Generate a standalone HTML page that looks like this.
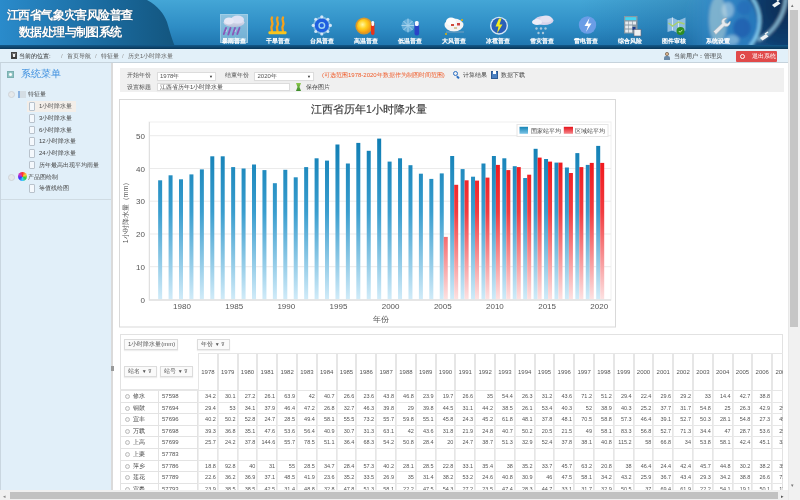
<!DOCTYPE html>
<html><head><meta charset="utf-8">
<style>
*{margin:0;padding:0;box-sizing:border-box}
html,body{width:800px;height:500px;overflow:hidden;background:#fff;font-family:"Liberation Sans",sans-serif;}
body{filter:blur(0.5px)}
.a{position:absolute}
#hdr{left:0;top:0;width:788px;height:49px;background:linear-gradient(#44a6d6,#2e8dc5 55%,#1d72ab);overflow:hidden}
.ttl{color:#fff;font-weight:bold;font-size:12px;letter-spacing:-0.6px;white-space:nowrap;text-shadow:0 0 1px #456}
.lb{top:36.5px;width:50px;font-size:6px;line-height:8px;color:#fff;text-align:center;white-space:nowrap;font-weight:bold;text-shadow:0 0 1px rgba(255,255,255,0.5)}
#crumb{left:0;top:49px;width:788px;height:14px;background:#e2f0f9;border-bottom:1px solid #c6d3dc}
#sbar{left:788px;top:0;width:12px;height:500px;background:#f1f1f1;border-left:1px solid #e8e8e8}
#side{left:0;top:63px;width:112px;height:437px;background:#e1eff9;border-left:1px solid #c9d6e0;border-right:1px solid #c9d6e0}
#main{left:111px;top:63px;width:677px;height:437px;background:#fff;border-left:2px solid #dadada}
.t7{font-size:6px;color:#444;white-space:nowrap;line-height:8px}
.ax{font-size:8px;fill:#555}
.lg{font-size:6px;fill:#444}
.hc{border-left:1px solid #e6e6e6;border-right:1px solid #e6e6e6;border-bottom:1px solid #e6e6e6;border-top:1px solid #e6e6e6;font-size:6px;color:#555;text-align:center;line-height:36px}
.rc{border-right:1px solid #e3e3e3;border-bottom:1px solid #e3e3e3;font-size:6px;color:#333;line-height:11px;white-space:nowrap}
.dc{border-left:1px solid #eee;border-right:1px solid #e6e6e6;border-bottom:1px solid #e6e6e6;font-size:5.5px;color:#555;text-align:right;padding-right:1px;line-height:11px;white-space:nowrap}
.pl{position:absolute;left:5px;top:3px;width:5px;height:5px;border:1px solid #bbb;border-radius:50%;background:#f4f4f4}
.nm{position:absolute;left:13px;top:0;font-size:6px;color:#444}
.sid{position:absolute;left:3px;top:0;font-size:6px;color:#555}
.fb{border:1px solid #dcdcdc;background:#fafafa;font-size:6px;color:#555;line-height:9px;padding-left:3px;white-space:nowrap;box-shadow:0 1px 1px #eee}
.si{position:absolute;font-size:6px;color:#444;white-space:nowrap;line-height:8px}
.doc{position:absolute;width:6px;height:8.5px;border:1px solid #b8c2cc;background:#f4f8fc;border-radius:1px}
</style></head><body>
<!-- header -->
<div id="hdr" class="a">
  <svg class="a" style="left:0;top:0" width="788" height="49">
    <defs>
      <linearGradient id="lg1" x1="0" x2="1" y1="0" y2="0">
        <stop offset="0" stop-color="#2a8bcb"/><stop offset="0.6" stop-color="#1a6a9e"/><stop offset="1" stop-color="#13557e"/>
      </linearGradient>
      <radialGradient id="earth" cx="0.5" cy="0.5" r="0.5">
        <stop offset="0" stop-color="#3d93cf" stop-opacity="0.3"/><stop offset="0.6" stop-color="#3a8fcf" stop-opacity="0.85"/><stop offset="0.9" stop-color="#2f86c8"/><stop offset="0.97" stop-color="#7fd0f4"/><stop offset="1" stop-color="#2a80c0" stop-opacity="0.2"/>
      </radialGradient>
      <radialGradient id="space" cx="0.8" cy="0.2" r="0.9">
        <stop offset="0" stop-color="#0b2a52"/><stop offset="0.7" stop-color="#0f3f70"/><stop offset="1" stop-color="#1a5c94"/>
      </radialGradient>
      <filter id="bl" x="-0.2" y="-0.2" width="1.4" height="1.4"><feGaussianBlur stdDeviation="1.5"/></filter>
      <linearGradient id="shade" x1="0" x2="1" y1="0" y2="0"><stop offset="0" stop-color="#0a3a6a" stop-opacity="0"/><stop offset="0.6" stop-color="#0a3a6a" stop-opacity="0.22"/><stop offset="1" stop-color="#0a3a6a" stop-opacity="0.3"/></linearGradient>
      <linearGradient id="earthH" x1="684" x2="758" y1="0" y2="0" gradientUnits="userSpaceOnUse"><stop offset="0" stop-color="#3a92cc" stop-opacity="0"/><stop offset="0.4" stop-color="#3388c8" stop-opacity="0.8"/><stop offset="1" stop-color="#2778bc"/></linearGradient>
      <linearGradient id="btm" x1="0" x2="0" y1="0" y2="1"><stop offset="0" stop-color="#13598a"/><stop offset="1" stop-color="#0a3657"/></linearGradient>
    </defs>
    <path d="M0 0 H147 C158 6 164 14 167 22 C170 32 172 40 176 49 H0 Z" fill="url(#lg1)"/>
    <rect x="580" y="0" width="208" height="49" fill="url(#shade)"/>
    <g filter="url(#bl)">
    <rect x="742" y="-5" width="55" height="60" fill="url(#space)"/>
    <circle cx="720" cy="24" r="38" fill="url(#earthH)"/>
    <ellipse cx="742" cy="28" rx="9" ry="10" fill="#1d5cae" opacity="0.75"/>
    <ellipse cx="744" cy="8" rx="7" ry="7" fill="#2468b8" opacity="0.6"/>
    <ellipse cx="718" cy="20" rx="9" ry="24" fill="#c8dcd8" opacity="0.5"/>
    <ellipse cx="728" cy="10" rx="6" ry="8" fill="#dcecf2" opacity="0.45"/>
    <ellipse cx="732" cy="40" rx="7" ry="5" fill="#d0e6f0" opacity="0.45"/>
    <path d="M752 -2 A38 38 0 0 1 750 46" stroke="#8cd8fa" stroke-width="2.6" fill="none"/>
    <path d="M786 -2 C784 18 772 34 758 40" stroke="#b0e6fb" stroke-width="3" fill="none" opacity="0.75"/>
    </g>
    <path d="M772 5 l6 -4 l2.5 2.5 l-6 4z" fill="#eef2f4"/><path d="M777 1 l3 -2" stroke="#eef2f4" stroke-width="1.5"/>
    <path d="M760 38 l6 -4 l2.5 2.5 l-6 4z" fill="#eef2f4"/><path d="M765 34 l3 -2" stroke="#eef2f4" stroke-width="1.5"/>
    <rect x="0" y="45" width="788" height="4" fill="url(#btm)"/>
  </svg>
  <div class="a ttl" style="left:7px;top:6.5px">江西省气象灾害风险普查</div>
  <div class="a ttl" style="left:19px;top:24px">数据处理与制图系统</div>
  <!-- nav items -->
  <div class="a" style="left:219.5px;top:14px;width:28px;height:28.5px;background:linear-gradient(#a9d0e6,#8cc0de);opacity:0.75;border:1px solid #c2e0f0"></div>
  <svg class="a" style="left:0;top:0" width="788" height="49">
    <defs>
      <linearGradient id="cl1" x1="0" y1="0" x2="0" y2="1"><stop offset="0" stop-color="#eef0fa"/><stop offset="1" stop-color="#b9bfd8"/></linearGradient>
      <radialGradient id="sun" cx="0.4" cy="0.4" r="0.6"><stop offset="0" stop-color="#fff6a0"/><stop offset="0.5" stop-color="#ffd020"/><stop offset="1" stop-color="#f59a10"/></radialGradient>
    </defs>
    <!-- rain -->
    <g>
      <ellipse cx="234" cy="22.5" rx="10.5" ry="4.5" fill="url(#cl1)"/>
      <ellipse cx="237.5" cy="19.5" rx="6.5" ry="4" fill="#dfe2f4"/>
      <ellipse cx="229" cy="21" rx="5" ry="3.5" fill="#e6e8f6"/>
      <path d="M226 28 l-2.2 6 M230.5 28 l-2.2 6.5 M235 28 l-2.2 6.5 M239.5 28 l-2.2 6" stroke="#8a58b8" stroke-width="1.9" stroke-linecap="round"/>
      <path d="M227 29.5 l-1 2.5 M236 29.5 l-1 2.5" stroke="#d8c8f0" stroke-width="0.8"/>
    </g>
    <!-- heat -->
    <path d="M272 17.5 c-2 3 2 5 0 8 c-1.5 2 0 4 0 6 M277.5 17.5 c-2 3 2 5 0 8 c-1.5 2 0 4 0 6 M283 17.5 c-2 3 2 5 0 8 c-1.5 2 0 4 0 6" stroke="#f5a21c" stroke-width="2.3" fill="none" stroke-linecap="round"/>
    <rect x="268.5" y="31.3" width="18" height="3" rx="1" fill="#f7c51e"/>
    <!-- typhoon -->
    <circle cx="321.8" cy="25.4" r="8.8" fill="#c8def8" opacity="0.5"/>
    <circle cx="321.8" cy="25.4" r="7" fill="#1f5fe0"/>
    <g fill="#e8f2ff" opacity="0.85"><circle cx="321.8" cy="16.8" r="1.6"/><circle cx="321.8" cy="34" r="1.6"/><circle cx="313.2" cy="25.4" r="1.6"/><circle cx="330.4" cy="25.4" r="1.6"/><circle cx="315.7" cy="19.3" r="1.5"/><circle cx="327.9" cy="19.3" r="1.5"/><circle cx="315.7" cy="31.5" r="1.5"/><circle cx="327.9" cy="31.5" r="1.5"/></g>
    <circle cx="321.8" cy="25.4" r="2.8" fill="none" stroke="#9ed6f0" stroke-width="1.4"/>
    <!-- sun thermo -->
    <circle cx="364" cy="26" r="8.6" fill="#f59a10" opacity="0.85"/>
    <circle cx="364" cy="26" r="7" fill="url(#sun)"/>
    <rect x="371" y="22" width="3.5" height="13" rx="1.7" fill="#e8341a"/>
    <rect x="371.4" y="21" width="2.7" height="5" rx="1.3" fill="#fafafa"/>
    <!-- low temp -->
    <circle cx="408" cy="25.5" r="6.5" fill="#8cc4e8" opacity="0.55"/>
    <g stroke="#b8dcf2" stroke-width="1" opacity="0.8"><path d="M408 18.5 v14 M401.5 25.5 h13 M403.5 21 l9 9 M412.5 21 l-9 9"/></g>
    <rect x="414.5" y="22" width="4.6" height="13.5" rx="2" fill="#2a44c8"/>
    <rect x="414.9" y="21" width="3.8" height="5" rx="1.5" fill="#f4f8ff"/>
    <!-- wind -->
    <ellipse cx="454" cy="25" rx="9.5" ry="6.5" fill="#f4f4f4"/>
    <ellipse cx="451" cy="21.5" rx="5" ry="4" fill="#fcfcfc"/>
    <rect x="451" y="24" width="3" height="2" fill="#d04a3a"/><rect x="457" y="23" width="3" height="2.5" fill="#c44"/><rect x="454" y="27" width="3" height="2" fill="#d8c8a0"/>
    <path d="M446 32 h18" stroke="#8aa8c0" stroke-width="0.8"/>
    <rect x="461" y="19" width="2" height="2" fill="#b8a830"/><rect x="445" y="33" width="2" height="2" fill="#b8a830"/>
    <!-- hail -->
    <circle cx="499" cy="25.7" r="9" fill="#d6e8f6"/>
    <circle cx="499" cy="25.7" r="7.6" fill="#2a5fb8"/>
    <path d="M499 18.5 l-3.5 8 h3 l-1.5 7 l5.5 -9 h-3 l2 -6z" fill="#f2ea20"/>
    <!-- snow -->
    <ellipse cx="544" cy="20.5" rx="9.5" ry="4.5" fill="#d8d4ec"/>
    <ellipse cx="546" cy="19" rx="6" ry="3.5" fill="#e4e2f2"/>
    <ellipse cx="537" cy="22" rx="5" ry="3" fill="#eeedf8"/>
    <g fill="#a8c8dc"><circle cx="536.5" cy="28.5" r="1.2"/><circle cx="541" cy="28.5" r="1.2"/><circle cx="545.5" cy="28.5" r="1.2"/><circle cx="538.5" cy="33" r="1.2"/><circle cx="543" cy="33" r="1.2"/></g>
    <!-- lightning -->
    <circle cx="587.5" cy="25" r="8.7" fill="#6a9de6"/>
    <path d="M589.5 18 l-5 8 h3.5 l-2 6 l5.5 -8.5 h-3.5z" fill="#fff"/>
    <!-- calculator -->
    <rect x="624" y="16" width="13.5" height="17.5" fill="#8898a4"/>
    <rect x="625.2" y="17.2" width="11" height="3" fill="#44d4f2"/>
    <g fill="#e6eaee"><rect x="625.2" y="21.5" width="3.2" height="3"/><rect x="629" y="21.5" width="3.2" height="3"/><rect x="632.8" y="21.5" width="3.2" height="3"/><rect x="625.2" y="25.5" width="3.2" height="3"/><rect x="629" y="25.5" width="3.2" height="3"/><rect x="625.2" y="29.5" width="3.2" height="3"/><rect x="629" y="29.5" width="3.2" height="3"/></g>
    <rect x="632.5" y="27" width="3" height="3" fill="#1a3a8a"/>
    <rect x="634" y="29.5" width="7" height="6.5" fill="#eef0f2" stroke="#667" stroke-width="0.6"/>
    <!-- map -->
    <path d="M667.5 19 l5 -1.5 l6 3 l7 -3 v13 l-7 3 l-6 -3 l-5 1.5z" fill="#8fbde0"/>
    <path d="M672.5 17.5 v13 M678.5 20.5 v13" stroke="#e4eef6" stroke-width="0.8"/>
    <path d="M668.5 23 l4 3 l6 -4 l6 2" stroke="#a8d070" stroke-width="1.5" fill="none"/>
    <circle cx="680.5" cy="31" r="4" fill="#2e8e22"/>
    <path d="M678.8 31 l1.3 1.3 l2.3 -2.5" stroke="#d8f0c0" stroke-width="0.9" fill="none"/>
    <!-- wrench -->
    <path d="M713.5 31.5 l8.5 -8 c-1.5 -3.5 1 -6 5 -5.5 l-2.5 2.8 l0.8 2.2 l2.4 0.6 l2.5 -2.6 c0.8 4 -2.5 6.5 -6 5.3 l-8.3 8.2z" fill="#e6eaee" stroke="#a6b0b8" stroke-width="0.6"/>
  </svg>
  <div class="a lb" style="left:208.5px">暴雨普查</div><div class="a lb" style="left:252.5px">干旱普查</div><div class="a lb" style="left:296.5px">台风普查</div><div class="a lb" style="left:340.5px">高温普查</div><div class="a lb" style="left:384.5px">低温普查</div><div class="a lb" style="left:428.5px">大风普查</div><div class="a lb" style="left:472.5px">冰雹普查</div><div class="a lb" style="left:516.5px">雪灾普查</div><div class="a lb" style="left:560.5px">雷电普查</div><div class="a lb" style="left:604.5px">综合风险</div><div class="a lb" style="left:648.5px">图件审核</div><div class="a lb" style="left:692.5px">系统设置</div>
</div>
<!-- breadcrumb -->
<div id="crumb" class="a">
  <div class="a" style="left:10.5px;top:3px;width:6.5px;height:7px;background:linear-gradient(#777,#333);border:1px solid #444"></div><div class="a" style="left:12.5px;top:5px;width:2.5px;height:3px;background:#eee"></div>
  <div class="a t7" style="left:19px;top:3px;color:#222">当前的位置:</div>
  <div class="a t7" style="left:61px;top:3px;color:#999">/</div>
  <div class="a t7" style="left:67px;top:3px;color:#555">首页导航</div>
  <div class="a t7" style="left:95px;top:3px;color:#999">/</div>
  <div class="a t7" style="left:101px;top:3px;color:#555">特征量</div>
  <div class="a t7" style="left:122px;top:3px;color:#999">/</div>
  <div class="a t7" style="left:128px;top:3px;color:#666">历史1小时降水量</div>
  <div class="a" style="left:665px;top:3px;width:3.5px;height:3.5px;border-radius:50%;background:#e0b890;border:0.5px solid #7a6a5a"></div><div class="a" style="left:664px;top:6.5px;width:5.5px;height:4px;border-radius:2px 2px 0 0;background:#6a8aa8"></div>
  <div class="a t7" style="left:674px;top:3px;color:#333">当前用户：管理员</div>
  <div class="a" style="left:736px;top:2px;width:41px;height:11px;background:#e04a4a;border-radius:1px"></div>
  <div class="a" style="left:740px;top:5px;width:5px;height:5px;border:1.2px solid #fff;border-radius:50%"></div>
  <div class="a t7" style="left:752px;top:3px;color:#fff">退出系统</div>
</div>
<!-- sidebar -->
<div id="side" class="a">
  <div class="a" style="left:5.5px;top:7.5px;width:7.5px;height:7.5px;background:radial-gradient(#fff 25%,#8cc0c0 60%);border:1px solid #7ab0b0"></div>
  <div class="a" style="left:20px;top:4px;font-size:10px;color:#3d8fdf;white-space:nowrap">系统菜单</div>
  <div class="a" style="left:6.5px;top:27.5px;width:7px;height:7px;border:1px solid #d0d4d8;border-radius:50%;background:#e4e8ea"></div>
  <div class="a" style="left:17px;top:27.5px;width:8px;height:7.5px;border-left:2.5px solid #8ab2e0;background:#d4dde4"></div>
  <div class="si" style="left:27px;top:27px">特征量</div>
  <div class="a" style="left:26px;top:38px;width:49px;height:11px;background:#f3eee9"></div>
  <div class="doc" style="left:28px;top:39px"></div><div class="si" style="left:38px;top:39px;color:#555">1小时降水量</div>
  <div class="doc" style="left:28px;top:51px"></div><div class="si" style="left:38px;top:51px">3小时降水量</div>
  <div class="doc" style="left:28px;top:62.5px"></div><div class="si" style="left:38px;top:62.5px">6小时降水量</div>
  <div class="doc" style="left:28px;top:74px"></div><div class="si" style="left:38px;top:74px">12小时降水量</div>
  <div class="doc" style="left:28px;top:86px"></div><div class="si" style="left:38px;top:86px">24小时降水量</div>
  <div class="doc" style="left:28px;top:97.5px"></div><div class="si" style="left:38px;top:97.5px">历年最高出现平均雨量</div>
  <div class="a" style="left:6.5px;top:110.5px;width:7px;height:7px;border:1px solid #d0d4d8;border-radius:50%;background:#e4e8ea"></div>
  <div class="a" style="left:17px;top:109px;width:9px;height:9px;border-radius:50%;background:conic-gradient(#f33,#fc3,#3c3,#3cf,#33f,#c3c,#f33)"></div>
  <div class="si" style="left:27px;top:109.5px">产品图绘制</div>
  <div class="doc" style="left:28px;top:121px"></div><div class="si" style="left:38px;top:121px">等值线绘图</div>
  <div class="a" style="left:0;top:136px;width:110px;height:1px;background:#cfdbe3"></div>
</div>
<!-- main -->
<div id="main" class="a"></div>
<div class="a" style="left:111px;top:366px;width:3px;height:5px;background:#999"></div>
<!-- toolbar -->
<div class="a" style="left:120px;top:68px;width:664px;height:24px;background:#f0f0f0"></div>
<div class="si" style="left:127px;top:71px;color:#555">开始年份</div>
<div class="a fb" style="left:156.5px;top:71.5px;width:59.5px;height:9px;background:#fff;line-height:7px;font-size:6px;padding-left:2.5px;color:#555">1978年<span style="position:absolute;right:2px;top:0;font-size:4px;color:#333">▼</span></div>
<div class="si" style="left:225px;top:71px;color:#555">结束年份</div>
<div class="a fb" style="left:254px;top:71.5px;width:60px;height:9px;background:#fff;line-height:7px;font-size:6px;padding-left:2.5px;color:#555">2020年<span style="position:absolute;right:2px;top:0;font-size:4px;color:#333">▼</span></div>
<div class="si" style="left:322px;top:71px;color:#f05a28">(可选范围1978-2020年数据作为制图时间范围)</div>
<div class="a" style="left:453px;top:71px;width:5px;height:5px;border:1.3px solid #2b6fc4;border-radius:50%"></div>
<div class="a" style="left:457px;top:76px;width:1.5px;height:3px;background:#2b6fc4;transform:rotate(-45deg)"></div>
<div class="si" style="left:463px;top:71px">计算结果</div>
<div class="a" style="left:491px;top:71px;width:7px;height:8px;background:#4a7fc0;border:1px solid #2d5a94"></div>
<div class="a" style="left:493px;top:71px;width:3px;height:3px;background:#fff"></div>
<div class="si" style="left:501px;top:71px">数据下载</div>
<div class="si" style="left:127px;top:83px;color:#555">设置标题</div>
<div class="a fb" style="left:156.5px;top:82.5px;width:133.5px;height:8.7px;background:#fff;line-height:6.7px;font-size:6px;padding-left:2.5px;color:#444">江西省历年1小时降水量</div>
<div class="a" style="left:296px;top:83px;width:5px;height:8px;background:linear-gradient(#8cc84a,#3a8a2a);clip-path:polygon(0 0,100% 0,70% 50%,100% 100%,0 100%,30% 50%)"></div>
<div class="si" style="left:306px;top:83px">保存图片</div>
<svg class="a" style="left:0;top:0" width="800" height="500">
<defs>
<linearGradient id="gb" gradientUnits="userSpaceOnUse" x1="0" y1="140" x2="0" y2="300"><stop offset="0" stop-color="#0f7db3"/><stop offset="0.45" stop-color="#3a9ecf"/><stop offset="1" stop-color="#d2ecf9"/></linearGradient>
<linearGradient id="gr" gradientUnits="userSpaceOnUse" x1="0" y1="140" x2="0" y2="300"><stop offset="0" stop-color="#f00a0e"/><stop offset="0.45" stop-color="#f23c40"/><stop offset="1" stop-color="#fde3e3"/></linearGradient>
</defs>
<rect x="119.5" y="99.5" width="496" height="227.5" fill="#fff" stroke="#d9d9d9"/>
<rect x="149" y="122" width="462" height="178" fill="#fff" stroke="#f0f0f0"/>
<text x="145" y="302.5" text-anchor="end" class="ax">0</text><line x1="149" x2="611" y1="266.7" y2="266.7" stroke="#ebebeb" stroke-width="1"/><text x="145" y="269.7" text-anchor="end" class="ax">10</text><line x1="149" x2="611" y1="234.0" y2="234.0" stroke="#ebebeb" stroke-width="1"/><text x="145" y="237.0" text-anchor="end" class="ax">20</text><line x1="149" x2="611" y1="201.2" y2="201.2" stroke="#ebebeb" stroke-width="1"/><text x="145" y="204.2" text-anchor="end" class="ax">30</text><line x1="149" x2="611" y1="168.5" y2="168.5" stroke="#ebebeb" stroke-width="1"/><text x="145" y="171.5" text-anchor="end" class="ax">40</text><line x1="149" x2="611" y1="135.7" y2="135.7" stroke="#ebebeb" stroke-width="1"/><text x="145" y="138.7" text-anchor="end" class="ax">50</text>
<rect x="158.14" y="180.3" width="4" height="119.2" fill="url(#gb)"/><rect x="168.57" y="175.3" width="4" height="124.2" fill="url(#gb)"/><rect x="179.00" y="179.3" width="4" height="120.2" fill="url(#gb)"/><rect x="189.43" y="174.4" width="4" height="125.1" fill="url(#gb)"/><rect x="199.86" y="169.4" width="4" height="130.1" fill="url(#gb)"/><rect x="210.29" y="156.3" width="4" height="143.2" fill="url(#gb)"/><rect x="220.72" y="156.3" width="4" height="143.2" fill="url(#gb)"/><rect x="231.15" y="167.1" width="4" height="132.4" fill="url(#gb)"/><rect x="241.58" y="168.5" width="4" height="131.0" fill="url(#gb)"/><rect x="252.01" y="164.5" width="4" height="135.0" fill="url(#gb)"/><rect x="262.44" y="170.1" width="4" height="129.4" fill="url(#gb)"/><rect x="272.87" y="183.2" width="4" height="116.3" fill="url(#gb)"/><rect x="283.30" y="169.8" width="4" height="129.7" fill="url(#gb)"/><rect x="293.73" y="177.3" width="4" height="122.2" fill="url(#gb)"/><rect x="304.16" y="167.1" width="4" height="132.4" fill="url(#gb)"/><rect x="314.59" y="158.3" width="4" height="141.2" fill="url(#gb)"/><rect x="325.02" y="160.6" width="4" height="138.9" fill="url(#gb)"/><rect x="335.45" y="144.5" width="4" height="155.0" fill="url(#gb)"/><rect x="345.88" y="163.5" width="4" height="136.0" fill="url(#gb)"/><rect x="356.31" y="142.9" width="4" height="156.6" fill="url(#gb)"/><rect x="366.74" y="150.8" width="4" height="148.7" fill="url(#gb)"/><rect x="377.17" y="138.6" width="4" height="160.9" fill="url(#gb)"/><rect x="387.60" y="161.6" width="4" height="137.9" fill="url(#gb)"/><rect x="398.03" y="158.3" width="4" height="141.2" fill="url(#gb)"/><rect x="408.46" y="165.2" width="4" height="134.3" fill="url(#gb)"/><rect x="418.89" y="173.7" width="4" height="125.8" fill="url(#gb)"/><rect x="429.32" y="178.9" width="4" height="120.6" fill="url(#gb)"/><rect x="439.75" y="173.4" width="4" height="126.1" fill="url(#gb)"/><rect x="443.75" y="236.9" width="4" height="62.6" fill="url(#gr)"/><rect x="450.18" y="156.0" width="4" height="143.5" fill="url(#gb)"/><rect x="454.18" y="184.8" width="4" height="114.7" fill="url(#gr)"/><rect x="460.61" y="169.1" width="4" height="130.4" fill="url(#gb)"/><rect x="464.61" y="180.3" width="4" height="119.2" fill="url(#gr)"/><rect x="471.04" y="176.7" width="4" height="122.8" fill="url(#gb)"/><rect x="475.04" y="180.6" width="4" height="118.9" fill="url(#gr)"/><rect x="481.47" y="163.5" width="4" height="136.0" fill="url(#gb)"/><rect x="485.47" y="177.6" width="4" height="121.9" fill="url(#gr)"/><rect x="491.90" y="156.0" width="4" height="143.5" fill="url(#gb)"/><rect x="495.90" y="164.9" width="4" height="134.6" fill="url(#gr)"/><rect x="502.33" y="158.3" width="4" height="141.2" fill="url(#gb)"/><rect x="506.33" y="170.1" width="4" height="129.4" fill="url(#gr)"/><rect x="512.76" y="166.2" width="4" height="133.3" fill="url(#gb)"/><rect x="516.76" y="167.1" width="4" height="132.4" fill="url(#gr)"/><rect x="523.19" y="178.0" width="4" height="121.5" fill="url(#gb)"/><rect x="527.19" y="174.7" width="4" height="124.8" fill="url(#gr)"/><rect x="533.62" y="148.8" width="4" height="150.7" fill="url(#gb)"/><rect x="537.62" y="157.6" width="4" height="141.9" fill="url(#gr)"/><rect x="544.05" y="159.0" width="4" height="140.5" fill="url(#gb)"/><rect x="548.05" y="161.6" width="4" height="137.9" fill="url(#gr)"/><rect x="554.48" y="162.6" width="4" height="136.9" fill="url(#gb)"/><rect x="558.48" y="162.6" width="4" height="136.9" fill="url(#gr)"/><rect x="564.91" y="167.5" width="4" height="132.0" fill="url(#gb)"/><rect x="568.91" y="173.0" width="4" height="126.5" fill="url(#gr)"/><rect x="575.34" y="153.1" width="4" height="146.4" fill="url(#gb)"/><rect x="579.34" y="167.1" width="4" height="132.4" fill="url(#gr)"/><rect x="585.77" y="164.9" width="4" height="134.6" fill="url(#gb)"/><rect x="589.77" y="162.9" width="4" height="136.6" fill="url(#gr)"/><rect x="596.20" y="145.9" width="4" height="153.6" fill="url(#gb)"/><rect x="600.20" y="162.9" width="4" height="136.6" fill="url(#gr)"/>
<line x1="149" x2="611" y1="300" y2="300" stroke="#e0e0e0" stroke-width="1.5"/>
<line x1="149.5" x2="149.5" y1="122" y2="300" stroke="#e0e0e0" stroke-width="1"/>
<text x="182.0" y="309" text-anchor="middle" class="ax">1980</text><text x="234.2" y="309" text-anchor="middle" class="ax">1985</text><text x="286.3" y="309" text-anchor="middle" class="ax">1990</text><text x="338.5" y="309" text-anchor="middle" class="ax">1995</text><text x="390.6" y="309" text-anchor="middle" class="ax">2000</text><text x="442.8" y="309" text-anchor="middle" class="ax">2005</text><text x="494.9" y="309" text-anchor="middle" class="ax">2010</text><text x="547.1" y="309" text-anchor="middle" class="ax">2015</text><text x="599.2" y="309" text-anchor="middle" class="ax">2020</text>
<text x="380.5" y="321.5" text-anchor="middle" class="ax" style="font-size:8px">年份</text>
<text transform="translate(128,211) rotate(-90)" text-anchor="middle" class="ax" style="font-size:7px">1小时降水量（mm）</text>
<text x="369" y="112.5" text-anchor="middle" style="font-size:10.5px;fill:#3a3a3a;stroke:#3a3a3a;stroke-width:0.15">江西省历年1小时降水量</text>
<rect x="517" y="124.5" width="91" height="12" fill="#fff" stroke="#e6e6e6"/>
<rect x="519.5" y="126.8" width="8.5" height="7" fill="url(#gbl)"/>
<rect x="563.8" y="126.8" width="9.2" height="7" fill="url(#grl)"/>
<defs>
<linearGradient id="gbl" x1="0" y1="0" x2="0" y2="1"><stop offset="0" stop-color="#1584b6"/><stop offset="1" stop-color="#7cc4e6"/></linearGradient>
<linearGradient id="grl" x1="0" y1="0" x2="0" y2="1"><stop offset="0" stop-color="#e60f17"/><stop offset="1" stop-color="#f58a8e"/></linearGradient>
</defs>
<text x="530.5" y="133" class="lg">国家站平均</text>
<text x="575" y="133" class="lg">区域站平均</text>
</svg>
<!-- table container -->
<div class="a" style="left:120px;top:334px;width:663px;height:166px;border:1px solid #e2e2e2;border-bottom:none;background:#fff"></div>
<div class="a fb" style="left:124px;top:339px;width:54px;height:11px">1小时降水量(mm)</div>
<div class="a fb" style="left:197px;top:339px;width:33px;height:11px">年份 <span style="font-size:5px">▼ ⊽</span></div>
<div class="a fb" style="left:124px;top:366px;width:33px;height:11px">站名 <span style="font-size:5px">▼ ⊽</span></div>
<div class="a fb" style="left:160px;top:366px;width:33px;height:11px">站号 <span style="font-size:5px">▼ ⊽</span></div>
<div class="a" style="left:120px;top:389px;width:78px;height:2px;background:#e6e6e6"></div>
<div class="a" style="left:120px;top:335px;width:663px;height:155px;overflow:hidden">
<div class="a" style="left:-120px;top:-335px;width:800px;height:500px">
<div class="a hc" style="left:198.0px;top:353px;width:19.80px;height:38px"><span>1978</span></div><div class="a hc" style="left:217.8px;top:353px;width:19.80px;height:38px"><span>1979</span></div><div class="a hc" style="left:237.6px;top:353px;width:19.80px;height:38px"><span>1980</span></div><div class="a hc" style="left:257.4px;top:353px;width:19.80px;height:38px"><span>1981</span></div><div class="a hc" style="left:277.2px;top:353px;width:19.80px;height:38px"><span>1982</span></div><div class="a hc" style="left:297.0px;top:353px;width:19.80px;height:38px"><span>1983</span></div><div class="a hc" style="left:316.8px;top:353px;width:19.80px;height:38px"><span>1984</span></div><div class="a hc" style="left:336.6px;top:353px;width:19.80px;height:38px"><span>1985</span></div><div class="a hc" style="left:356.4px;top:353px;width:19.80px;height:38px"><span>1986</span></div><div class="a hc" style="left:376.2px;top:353px;width:19.80px;height:38px"><span>1987</span></div><div class="a hc" style="left:396.0px;top:353px;width:19.80px;height:38px"><span>1988</span></div><div class="a hc" style="left:415.8px;top:353px;width:19.80px;height:38px"><span>1989</span></div><div class="a hc" style="left:435.6px;top:353px;width:19.80px;height:38px"><span>1990</span></div><div class="a hc" style="left:455.4px;top:353px;width:19.80px;height:38px"><span>1991</span></div><div class="a hc" style="left:475.2px;top:353px;width:19.80px;height:38px"><span>1992</span></div><div class="a hc" style="left:495.0px;top:353px;width:19.80px;height:38px"><span>1993</span></div><div class="a hc" style="left:514.8px;top:353px;width:19.80px;height:38px"><span>1994</span></div><div class="a hc" style="left:534.6px;top:353px;width:19.80px;height:38px"><span>1995</span></div><div class="a hc" style="left:554.4px;top:353px;width:19.80px;height:38px"><span>1996</span></div><div class="a hc" style="left:574.2px;top:353px;width:19.80px;height:38px"><span>1997</span></div><div class="a hc" style="left:594.0px;top:353px;width:19.80px;height:38px"><span>1998</span></div><div class="a hc" style="left:613.8px;top:353px;width:19.80px;height:38px"><span>1999</span></div><div class="a hc" style="left:633.6px;top:353px;width:19.80px;height:38px"><span>2000</span></div><div class="a hc" style="left:653.4px;top:353px;width:19.80px;height:38px"><span>2001</span></div><div class="a hc" style="left:673.2px;top:353px;width:19.80px;height:38px"><span>2002</span></div><div class="a hc" style="left:693.0px;top:353px;width:19.80px;height:38px"><span>2003</span></div><div class="a hc" style="left:712.8px;top:353px;width:19.80px;height:38px"><span>2004</span></div><div class="a hc" style="left:732.6px;top:353px;width:19.80px;height:38px"><span>2005</span></div><div class="a hc" style="left:752.4px;top:353px;width:19.80px;height:38px"><span>2006</span></div><div class="a hc" style="left:772.2px;top:353px;width:19.80px;height:38px"><span>2007</span></div><div class="a rc" style="left:120px;top:391.0px;width:39px;height:11.6px"><i class="pl"></i><span class="nm">修水</span></div><div class="a rc" style="left:159px;top:391.0px;width:39px;height:11.6px"><span class="sid">57598</span></div><div class="a dc" style="left:198.0px;top:391.0px;width:19.80px;height:11.6px">34.2</div><div class="a dc" style="left:217.8px;top:391.0px;width:19.80px;height:11.6px">30.1</div><div class="a dc" style="left:237.6px;top:391.0px;width:19.80px;height:11.6px">27.2</div><div class="a dc" style="left:257.4px;top:391.0px;width:19.80px;height:11.6px">26.1</div><div class="a dc" style="left:277.2px;top:391.0px;width:19.80px;height:11.6px">63.9</div><div class="a dc" style="left:297.0px;top:391.0px;width:19.80px;height:11.6px">42</div><div class="a dc" style="left:316.8px;top:391.0px;width:19.80px;height:11.6px">40.7</div><div class="a dc" style="left:336.6px;top:391.0px;width:19.80px;height:11.6px">26.6</div><div class="a dc" style="left:356.4px;top:391.0px;width:19.80px;height:11.6px">23.6</div><div class="a dc" style="left:376.2px;top:391.0px;width:19.80px;height:11.6px">43.8</div><div class="a dc" style="left:396.0px;top:391.0px;width:19.80px;height:11.6px">46.8</div><div class="a dc" style="left:415.8px;top:391.0px;width:19.80px;height:11.6px">23.9</div><div class="a dc" style="left:435.6px;top:391.0px;width:19.80px;height:11.6px">19.7</div><div class="a dc" style="left:455.4px;top:391.0px;width:19.80px;height:11.6px">26.6</div><div class="a dc" style="left:475.2px;top:391.0px;width:19.80px;height:11.6px">35</div><div class="a dc" style="left:495.0px;top:391.0px;width:19.80px;height:11.6px">54.4</div><div class="a dc" style="left:514.8px;top:391.0px;width:19.80px;height:11.6px">26.3</div><div class="a dc" style="left:534.6px;top:391.0px;width:19.80px;height:11.6px">31.2</div><div class="a dc" style="left:554.4px;top:391.0px;width:19.80px;height:11.6px">43.6</div><div class="a dc" style="left:574.2px;top:391.0px;width:19.80px;height:11.6px">71.2</div><div class="a dc" style="left:594.0px;top:391.0px;width:19.80px;height:11.6px">51.2</div><div class="a dc" style="left:613.8px;top:391.0px;width:19.80px;height:11.6px">29.4</div><div class="a dc" style="left:633.6px;top:391.0px;width:19.80px;height:11.6px">22.4</div><div class="a dc" style="left:653.4px;top:391.0px;width:19.80px;height:11.6px">29.6</div><div class="a dc" style="left:673.2px;top:391.0px;width:19.80px;height:11.6px">29.2</div><div class="a dc" style="left:693.0px;top:391.0px;width:19.80px;height:11.6px">33</div><div class="a dc" style="left:712.8px;top:391.0px;width:19.80px;height:11.6px">14.4</div><div class="a dc" style="left:732.6px;top:391.0px;width:19.80px;height:11.6px">42.7</div><div class="a dc" style="left:752.4px;top:391.0px;width:19.80px;height:11.6px">38.8</div><div class="a dc" style="left:772.2px;top:391.0px;width:19.80px;height:11.6px"></div><div class="a rc" style="left:120px;top:402.6px;width:39px;height:11.6px"><i class="pl"></i><span class="nm">铜鼓</span></div><div class="a rc" style="left:159px;top:402.6px;width:39px;height:11.6px"><span class="sid">57694</span></div><div class="a dc" style="left:198.0px;top:402.6px;width:19.80px;height:11.6px">29.4</div><div class="a dc" style="left:217.8px;top:402.6px;width:19.80px;height:11.6px">53</div><div class="a dc" style="left:237.6px;top:402.6px;width:19.80px;height:11.6px">34.1</div><div class="a dc" style="left:257.4px;top:402.6px;width:19.80px;height:11.6px">37.9</div><div class="a dc" style="left:277.2px;top:402.6px;width:19.80px;height:11.6px">46.4</div><div class="a dc" style="left:297.0px;top:402.6px;width:19.80px;height:11.6px">47.2</div><div class="a dc" style="left:316.8px;top:402.6px;width:19.80px;height:11.6px">26.8</div><div class="a dc" style="left:336.6px;top:402.6px;width:19.80px;height:11.6px">32.7</div><div class="a dc" style="left:356.4px;top:402.6px;width:19.80px;height:11.6px">46.3</div><div class="a dc" style="left:376.2px;top:402.6px;width:19.80px;height:11.6px">39.8</div><div class="a dc" style="left:396.0px;top:402.6px;width:19.80px;height:11.6px">29</div><div class="a dc" style="left:415.8px;top:402.6px;width:19.80px;height:11.6px">39.8</div><div class="a dc" style="left:435.6px;top:402.6px;width:19.80px;height:11.6px">44.5</div><div class="a dc" style="left:455.4px;top:402.6px;width:19.80px;height:11.6px">31.1</div><div class="a dc" style="left:475.2px;top:402.6px;width:19.80px;height:11.6px">44.2</div><div class="a dc" style="left:495.0px;top:402.6px;width:19.80px;height:11.6px">38.5</div><div class="a dc" style="left:514.8px;top:402.6px;width:19.80px;height:11.6px">26.1</div><div class="a dc" style="left:534.6px;top:402.6px;width:19.80px;height:11.6px">53.4</div><div class="a dc" style="left:554.4px;top:402.6px;width:19.80px;height:11.6px">40.3</div><div class="a dc" style="left:574.2px;top:402.6px;width:19.80px;height:11.6px">52</div><div class="a dc" style="left:594.0px;top:402.6px;width:19.80px;height:11.6px">38.9</div><div class="a dc" style="left:613.8px;top:402.6px;width:19.80px;height:11.6px">40.3</div><div class="a dc" style="left:633.6px;top:402.6px;width:19.80px;height:11.6px">25.2</div><div class="a dc" style="left:653.4px;top:402.6px;width:19.80px;height:11.6px">37.7</div><div class="a dc" style="left:673.2px;top:402.6px;width:19.80px;height:11.6px">31.7</div><div class="a dc" style="left:693.0px;top:402.6px;width:19.80px;height:11.6px">54.8</div><div class="a dc" style="left:712.8px;top:402.6px;width:19.80px;height:11.6px">25</div><div class="a dc" style="left:732.6px;top:402.6px;width:19.80px;height:11.6px">26.3</div><div class="a dc" style="left:752.4px;top:402.6px;width:19.80px;height:11.6px">42.9</div><div class="a dc" style="left:772.2px;top:402.6px;width:19.80px;height:11.6px">29.5</div><div class="a rc" style="left:120px;top:414.2px;width:39px;height:11.6px"><i class="pl"></i><span class="nm">宜丰</span></div><div class="a rc" style="left:159px;top:414.2px;width:39px;height:11.6px"><span class="sid">57696</span></div><div class="a dc" style="left:198.0px;top:414.2px;width:19.80px;height:11.6px">40.2</div><div class="a dc" style="left:217.8px;top:414.2px;width:19.80px;height:11.6px">50.2</div><div class="a dc" style="left:237.6px;top:414.2px;width:19.80px;height:11.6px">52.8</div><div class="a dc" style="left:257.4px;top:414.2px;width:19.80px;height:11.6px">24.7</div><div class="a dc" style="left:277.2px;top:414.2px;width:19.80px;height:11.6px">28.5</div><div class="a dc" style="left:297.0px;top:414.2px;width:19.80px;height:11.6px">49.4</div><div class="a dc" style="left:316.8px;top:414.2px;width:19.80px;height:11.6px">58.1</div><div class="a dc" style="left:336.6px;top:414.2px;width:19.80px;height:11.6px">55.5</div><div class="a dc" style="left:356.4px;top:414.2px;width:19.80px;height:11.6px">73.2</div><div class="a dc" style="left:376.2px;top:414.2px;width:19.80px;height:11.6px">55.7</div><div class="a dc" style="left:396.0px;top:414.2px;width:19.80px;height:11.6px">59.8</div><div class="a dc" style="left:415.8px;top:414.2px;width:19.80px;height:11.6px">55.1</div><div class="a dc" style="left:435.6px;top:414.2px;width:19.80px;height:11.6px">45.8</div><div class="a dc" style="left:455.4px;top:414.2px;width:19.80px;height:11.6px">24.3</div><div class="a dc" style="left:475.2px;top:414.2px;width:19.80px;height:11.6px">45.2</div><div class="a dc" style="left:495.0px;top:414.2px;width:19.80px;height:11.6px">61.8</div><div class="a dc" style="left:514.8px;top:414.2px;width:19.80px;height:11.6px">48.1</div><div class="a dc" style="left:534.6px;top:414.2px;width:19.80px;height:11.6px">37.8</div><div class="a dc" style="left:554.4px;top:414.2px;width:19.80px;height:11.6px">48.1</div><div class="a dc" style="left:574.2px;top:414.2px;width:19.80px;height:11.6px">70.5</div><div class="a dc" style="left:594.0px;top:414.2px;width:19.80px;height:11.6px">58.8</div><div class="a dc" style="left:613.8px;top:414.2px;width:19.80px;height:11.6px">57.3</div><div class="a dc" style="left:633.6px;top:414.2px;width:19.80px;height:11.6px">46.4</div><div class="a dc" style="left:653.4px;top:414.2px;width:19.80px;height:11.6px">39.1</div><div class="a dc" style="left:673.2px;top:414.2px;width:19.80px;height:11.6px">52.7</div><div class="a dc" style="left:693.0px;top:414.2px;width:19.80px;height:11.6px">50.3</div><div class="a dc" style="left:712.8px;top:414.2px;width:19.80px;height:11.6px">28.1</div><div class="a dc" style="left:732.6px;top:414.2px;width:19.80px;height:11.6px">54.8</div><div class="a dc" style="left:752.4px;top:414.2px;width:19.80px;height:11.6px">27.3</div><div class="a dc" style="left:772.2px;top:414.2px;width:19.80px;height:11.6px">45.1</div><div class="a rc" style="left:120px;top:425.8px;width:39px;height:11.6px"><i class="pl"></i><span class="nm">万载</span></div><div class="a rc" style="left:159px;top:425.8px;width:39px;height:11.6px"><span class="sid">57698</span></div><div class="a dc" style="left:198.0px;top:425.8px;width:19.80px;height:11.6px">39.3</div><div class="a dc" style="left:217.8px;top:425.8px;width:19.80px;height:11.6px">36.8</div><div class="a dc" style="left:237.6px;top:425.8px;width:19.80px;height:11.6px">35.1</div><div class="a dc" style="left:257.4px;top:425.8px;width:19.80px;height:11.6px">47.6</div><div class="a dc" style="left:277.2px;top:425.8px;width:19.80px;height:11.6px">53.6</div><div class="a dc" style="left:297.0px;top:425.8px;width:19.80px;height:11.6px">56.4</div><div class="a dc" style="left:316.8px;top:425.8px;width:19.80px;height:11.6px">40.9</div><div class="a dc" style="left:336.6px;top:425.8px;width:19.80px;height:11.6px">30.7</div><div class="a dc" style="left:356.4px;top:425.8px;width:19.80px;height:11.6px">31.3</div><div class="a dc" style="left:376.2px;top:425.8px;width:19.80px;height:11.6px">63.1</div><div class="a dc" style="left:396.0px;top:425.8px;width:19.80px;height:11.6px">42</div><div class="a dc" style="left:415.8px;top:425.8px;width:19.80px;height:11.6px">43.6</div><div class="a dc" style="left:435.6px;top:425.8px;width:19.80px;height:11.6px">31.8</div><div class="a dc" style="left:455.4px;top:425.8px;width:19.80px;height:11.6px">21.9</div><div class="a dc" style="left:475.2px;top:425.8px;width:19.80px;height:11.6px">24.8</div><div class="a dc" style="left:495.0px;top:425.8px;width:19.80px;height:11.6px">40.7</div><div class="a dc" style="left:514.8px;top:425.8px;width:19.80px;height:11.6px">50.2</div><div class="a dc" style="left:534.6px;top:425.8px;width:19.80px;height:11.6px">20.5</div><div class="a dc" style="left:554.4px;top:425.8px;width:19.80px;height:11.6px">21.5</div><div class="a dc" style="left:574.2px;top:425.8px;width:19.80px;height:11.6px">49</div><div class="a dc" style="left:594.0px;top:425.8px;width:19.80px;height:11.6px">58.1</div><div class="a dc" style="left:613.8px;top:425.8px;width:19.80px;height:11.6px">83.3</div><div class="a dc" style="left:633.6px;top:425.8px;width:19.80px;height:11.6px">56.8</div><div class="a dc" style="left:653.4px;top:425.8px;width:19.80px;height:11.6px">52.7</div><div class="a dc" style="left:673.2px;top:425.8px;width:19.80px;height:11.6px">71.3</div><div class="a dc" style="left:693.0px;top:425.8px;width:19.80px;height:11.6px">34.4</div><div class="a dc" style="left:712.8px;top:425.8px;width:19.80px;height:11.6px">47</div><div class="a dc" style="left:732.6px;top:425.8px;width:19.80px;height:11.6px">28.7</div><div class="a dc" style="left:752.4px;top:425.8px;width:19.80px;height:11.6px">53.6</div><div class="a dc" style="left:772.2px;top:425.8px;width:19.80px;height:11.6px">25.4</div><div class="a rc" style="left:120px;top:437.4px;width:39px;height:11.6px"><i class="pl"></i><span class="nm">上高</span></div><div class="a rc" style="left:159px;top:437.4px;width:39px;height:11.6px"><span class="sid">57699</span></div><div class="a dc" style="left:198.0px;top:437.4px;width:19.80px;height:11.6px">25.7</div><div class="a dc" style="left:217.8px;top:437.4px;width:19.80px;height:11.6px">24.2</div><div class="a dc" style="left:237.6px;top:437.4px;width:19.80px;height:11.6px">37.8</div><div class="a dc" style="left:257.4px;top:437.4px;width:19.80px;height:11.6px">144.6</div><div class="a dc" style="left:277.2px;top:437.4px;width:19.80px;height:11.6px">55.7</div><div class="a dc" style="left:297.0px;top:437.4px;width:19.80px;height:11.6px">78.5</div><div class="a dc" style="left:316.8px;top:437.4px;width:19.80px;height:11.6px">51.1</div><div class="a dc" style="left:336.6px;top:437.4px;width:19.80px;height:11.6px">36.4</div><div class="a dc" style="left:356.4px;top:437.4px;width:19.80px;height:11.6px">68.3</div><div class="a dc" style="left:376.2px;top:437.4px;width:19.80px;height:11.6px">54.2</div><div class="a dc" style="left:396.0px;top:437.4px;width:19.80px;height:11.6px">50.8</div><div class="a dc" style="left:415.8px;top:437.4px;width:19.80px;height:11.6px">28.4</div><div class="a dc" style="left:435.6px;top:437.4px;width:19.80px;height:11.6px">20</div><div class="a dc" style="left:455.4px;top:437.4px;width:19.80px;height:11.6px">24.7</div><div class="a dc" style="left:475.2px;top:437.4px;width:19.80px;height:11.6px">38.7</div><div class="a dc" style="left:495.0px;top:437.4px;width:19.80px;height:11.6px">51.3</div><div class="a dc" style="left:514.8px;top:437.4px;width:19.80px;height:11.6px">32.9</div><div class="a dc" style="left:534.6px;top:437.4px;width:19.80px;height:11.6px">52.4</div><div class="a dc" style="left:554.4px;top:437.4px;width:19.80px;height:11.6px">37.8</div><div class="a dc" style="left:574.2px;top:437.4px;width:19.80px;height:11.6px">38.1</div><div class="a dc" style="left:594.0px;top:437.4px;width:19.80px;height:11.6px">40.8</div><div class="a dc" style="left:613.8px;top:437.4px;width:19.80px;height:11.6px">115.2</div><div class="a dc" style="left:633.6px;top:437.4px;width:19.80px;height:11.6px">58</div><div class="a dc" style="left:653.4px;top:437.4px;width:19.80px;height:11.6px">66.8</div><div class="a dc" style="left:673.2px;top:437.4px;width:19.80px;height:11.6px">34</div><div class="a dc" style="left:693.0px;top:437.4px;width:19.80px;height:11.6px">53.8</div><div class="a dc" style="left:712.8px;top:437.4px;width:19.80px;height:11.6px">58.1</div><div class="a dc" style="left:732.6px;top:437.4px;width:19.80px;height:11.6px">42.4</div><div class="a dc" style="left:752.4px;top:437.4px;width:19.80px;height:11.6px">45.1</div><div class="a dc" style="left:772.2px;top:437.4px;width:19.80px;height:11.6px">33.2</div><div class="a rc" style="left:120px;top:449.0px;width:39px;height:11.6px"><i class="pl"></i><span class="nm">上栗</span></div><div class="a rc" style="left:159px;top:449.0px;width:39px;height:11.6px"><span class="sid">57783</span></div><div class="a dc" style="left:198.0px;top:449.0px;width:19.80px;height:11.6px"></div><div class="a dc" style="left:217.8px;top:449.0px;width:19.80px;height:11.6px"></div><div class="a dc" style="left:237.6px;top:449.0px;width:19.80px;height:11.6px"></div><div class="a dc" style="left:257.4px;top:449.0px;width:19.80px;height:11.6px"></div><div class="a dc" style="left:277.2px;top:449.0px;width:19.80px;height:11.6px"></div><div class="a dc" style="left:297.0px;top:449.0px;width:19.80px;height:11.6px"></div><div class="a dc" style="left:316.8px;top:449.0px;width:19.80px;height:11.6px"></div><div class="a dc" style="left:336.6px;top:449.0px;width:19.80px;height:11.6px"></div><div class="a dc" style="left:356.4px;top:449.0px;width:19.80px;height:11.6px"></div><div class="a dc" style="left:376.2px;top:449.0px;width:19.80px;height:11.6px"></div><div class="a dc" style="left:396.0px;top:449.0px;width:19.80px;height:11.6px"></div><div class="a dc" style="left:415.8px;top:449.0px;width:19.80px;height:11.6px"></div><div class="a dc" style="left:435.6px;top:449.0px;width:19.80px;height:11.6px"></div><div class="a dc" style="left:455.4px;top:449.0px;width:19.80px;height:11.6px"></div><div class="a dc" style="left:475.2px;top:449.0px;width:19.80px;height:11.6px"></div><div class="a dc" style="left:495.0px;top:449.0px;width:19.80px;height:11.6px"></div><div class="a dc" style="left:514.8px;top:449.0px;width:19.80px;height:11.6px"></div><div class="a dc" style="left:534.6px;top:449.0px;width:19.80px;height:11.6px"></div><div class="a dc" style="left:554.4px;top:449.0px;width:19.80px;height:11.6px"></div><div class="a dc" style="left:574.2px;top:449.0px;width:19.80px;height:11.6px"></div><div class="a dc" style="left:594.0px;top:449.0px;width:19.80px;height:11.6px"></div><div class="a dc" style="left:613.8px;top:449.0px;width:19.80px;height:11.6px"></div><div class="a dc" style="left:633.6px;top:449.0px;width:19.80px;height:11.6px"></div><div class="a dc" style="left:653.4px;top:449.0px;width:19.80px;height:11.6px"></div><div class="a dc" style="left:673.2px;top:449.0px;width:19.80px;height:11.6px"></div><div class="a dc" style="left:693.0px;top:449.0px;width:19.80px;height:11.6px"></div><div class="a dc" style="left:712.8px;top:449.0px;width:19.80px;height:11.6px"></div><div class="a dc" style="left:732.6px;top:449.0px;width:19.80px;height:11.6px"></div><div class="a dc" style="left:752.4px;top:449.0px;width:19.80px;height:11.6px"></div><div class="a dc" style="left:772.2px;top:449.0px;width:19.80px;height:11.6px"></div><div class="a rc" style="left:120px;top:460.6px;width:39px;height:11.6px"><i class="pl"></i><span class="nm">萍乡</span></div><div class="a rc" style="left:159px;top:460.6px;width:39px;height:11.6px"><span class="sid">57786</span></div><div class="a dc" style="left:198.0px;top:460.6px;width:19.80px;height:11.6px">18.8</div><div class="a dc" style="left:217.8px;top:460.6px;width:19.80px;height:11.6px">92.8</div><div class="a dc" style="left:237.6px;top:460.6px;width:19.80px;height:11.6px">40</div><div class="a dc" style="left:257.4px;top:460.6px;width:19.80px;height:11.6px">31</div><div class="a dc" style="left:277.2px;top:460.6px;width:19.80px;height:11.6px">55</div><div class="a dc" style="left:297.0px;top:460.6px;width:19.80px;height:11.6px">28.5</div><div class="a dc" style="left:316.8px;top:460.6px;width:19.80px;height:11.6px">34.7</div><div class="a dc" style="left:336.6px;top:460.6px;width:19.80px;height:11.6px">28.4</div><div class="a dc" style="left:356.4px;top:460.6px;width:19.80px;height:11.6px">57.3</div><div class="a dc" style="left:376.2px;top:460.6px;width:19.80px;height:11.6px">40.2</div><div class="a dc" style="left:396.0px;top:460.6px;width:19.80px;height:11.6px">28.1</div><div class="a dc" style="left:415.8px;top:460.6px;width:19.80px;height:11.6px">28.5</div><div class="a dc" style="left:435.6px;top:460.6px;width:19.80px;height:11.6px">22.8</div><div class="a dc" style="left:455.4px;top:460.6px;width:19.80px;height:11.6px">33.1</div><div class="a dc" style="left:475.2px;top:460.6px;width:19.80px;height:11.6px">35.4</div><div class="a dc" style="left:495.0px;top:460.6px;width:19.80px;height:11.6px">38</div><div class="a dc" style="left:514.8px;top:460.6px;width:19.80px;height:11.6px">35.2</div><div class="a dc" style="left:534.6px;top:460.6px;width:19.80px;height:11.6px">33.7</div><div class="a dc" style="left:554.4px;top:460.6px;width:19.80px;height:11.6px">45.7</div><div class="a dc" style="left:574.2px;top:460.6px;width:19.80px;height:11.6px">63.2</div><div class="a dc" style="left:594.0px;top:460.6px;width:19.80px;height:11.6px">20.8</div><div class="a dc" style="left:613.8px;top:460.6px;width:19.80px;height:11.6px">38</div><div class="a dc" style="left:633.6px;top:460.6px;width:19.80px;height:11.6px">46.4</div><div class="a dc" style="left:653.4px;top:460.6px;width:19.80px;height:11.6px">24.4</div><div class="a dc" style="left:673.2px;top:460.6px;width:19.80px;height:11.6px">42.4</div><div class="a dc" style="left:693.0px;top:460.6px;width:19.80px;height:11.6px">45.7</div><div class="a dc" style="left:712.8px;top:460.6px;width:19.80px;height:11.6px">44.8</div><div class="a dc" style="left:732.6px;top:460.6px;width:19.80px;height:11.6px">30.2</div><div class="a dc" style="left:752.4px;top:460.6px;width:19.80px;height:11.6px">38.2</div><div class="a dc" style="left:772.2px;top:460.6px;width:19.80px;height:11.6px">35.1</div><div class="a rc" style="left:120px;top:472.2px;width:39px;height:11.6px"><i class="pl"></i><span class="nm">莲花</span></div><div class="a rc" style="left:159px;top:472.2px;width:39px;height:11.6px"><span class="sid">57789</span></div><div class="a dc" style="left:198.0px;top:472.2px;width:19.80px;height:11.6px">22.6</div><div class="a dc" style="left:217.8px;top:472.2px;width:19.80px;height:11.6px">36.2</div><div class="a dc" style="left:237.6px;top:472.2px;width:19.80px;height:11.6px">36.9</div><div class="a dc" style="left:257.4px;top:472.2px;width:19.80px;height:11.6px">37.1</div><div class="a dc" style="left:277.2px;top:472.2px;width:19.80px;height:11.6px">48.5</div><div class="a dc" style="left:297.0px;top:472.2px;width:19.80px;height:11.6px">41.9</div><div class="a dc" style="left:316.8px;top:472.2px;width:19.80px;height:11.6px">23.6</div><div class="a dc" style="left:336.6px;top:472.2px;width:19.80px;height:11.6px">35.2</div><div class="a dc" style="left:356.4px;top:472.2px;width:19.80px;height:11.6px">33.5</div><div class="a dc" style="left:376.2px;top:472.2px;width:19.80px;height:11.6px">26.9</div><div class="a dc" style="left:396.0px;top:472.2px;width:19.80px;height:11.6px">35</div><div class="a dc" style="left:415.8px;top:472.2px;width:19.80px;height:11.6px">31.4</div><div class="a dc" style="left:435.6px;top:472.2px;width:19.80px;height:11.6px">38.2</div><div class="a dc" style="left:455.4px;top:472.2px;width:19.80px;height:11.6px">53.2</div><div class="a dc" style="left:475.2px;top:472.2px;width:19.80px;height:11.6px">24.6</div><div class="a dc" style="left:495.0px;top:472.2px;width:19.80px;height:11.6px">40.8</div><div class="a dc" style="left:514.8px;top:472.2px;width:19.80px;height:11.6px">30.9</div><div class="a dc" style="left:534.6px;top:472.2px;width:19.80px;height:11.6px">46</div><div class="a dc" style="left:554.4px;top:472.2px;width:19.80px;height:11.6px">47.5</div><div class="a dc" style="left:574.2px;top:472.2px;width:19.80px;height:11.6px">58.1</div><div class="a dc" style="left:594.0px;top:472.2px;width:19.80px;height:11.6px">34.2</div><div class="a dc" style="left:613.8px;top:472.2px;width:19.80px;height:11.6px">43.2</div><div class="a dc" style="left:633.6px;top:472.2px;width:19.80px;height:11.6px">25.9</div><div class="a dc" style="left:653.4px;top:472.2px;width:19.80px;height:11.6px">36.7</div><div class="a dc" style="left:673.2px;top:472.2px;width:19.80px;height:11.6px">43.4</div><div class="a dc" style="left:693.0px;top:472.2px;width:19.80px;height:11.6px">29.3</div><div class="a dc" style="left:712.8px;top:472.2px;width:19.80px;height:11.6px">34.2</div><div class="a dc" style="left:732.6px;top:472.2px;width:19.80px;height:11.6px">38.8</div><div class="a dc" style="left:752.4px;top:472.2px;width:19.80px;height:11.6px">26.6</div><div class="a dc" style="left:772.2px;top:472.2px;width:19.80px;height:11.6px">71.2</div><div class="a rc" style="left:120px;top:483.8px;width:39px;height:11.6px"><i class="pl"></i><span class="nm">宜春</span></div><div class="a rc" style="left:159px;top:483.8px;width:39px;height:11.6px"><span class="sid">57793</span></div><div class="a dc" style="left:198.0px;top:483.8px;width:19.80px;height:11.6px">23.9</div><div class="a dc" style="left:217.8px;top:483.8px;width:19.80px;height:11.6px">38.5</div><div class="a dc" style="left:237.6px;top:483.8px;width:19.80px;height:11.6px">38.5</div><div class="a dc" style="left:257.4px;top:483.8px;width:19.80px;height:11.6px">42.5</div><div class="a dc" style="left:277.2px;top:483.8px;width:19.80px;height:11.6px">31.4</div><div class="a dc" style="left:297.0px;top:483.8px;width:19.80px;height:11.6px">48.8</div><div class="a dc" style="left:316.8px;top:483.8px;width:19.80px;height:11.6px">32.8</div><div class="a dc" style="left:336.6px;top:483.8px;width:19.80px;height:11.6px">47.8</div><div class="a dc" style="left:356.4px;top:483.8px;width:19.80px;height:11.6px">51.3</div><div class="a dc" style="left:376.2px;top:483.8px;width:19.80px;height:11.6px">58.1</div><div class="a dc" style="left:396.0px;top:483.8px;width:19.80px;height:11.6px">22.2</div><div class="a dc" style="left:415.8px;top:483.8px;width:19.80px;height:11.6px">47.5</div><div class="a dc" style="left:435.6px;top:483.8px;width:19.80px;height:11.6px">54.3</div><div class="a dc" style="left:455.4px;top:483.8px;width:19.80px;height:11.6px">27.2</div><div class="a dc" style="left:475.2px;top:483.8px;width:19.80px;height:11.6px">23.5</div><div class="a dc" style="left:495.0px;top:483.8px;width:19.80px;height:11.6px">47.4</div><div class="a dc" style="left:514.8px;top:483.8px;width:19.80px;height:11.6px">28.3</div><div class="a dc" style="left:534.6px;top:483.8px;width:19.80px;height:11.6px">44.7</div><div class="a dc" style="left:554.4px;top:483.8px;width:19.80px;height:11.6px">33.1</div><div class="a dc" style="left:574.2px;top:483.8px;width:19.80px;height:11.6px">31.7</div><div class="a dc" style="left:594.0px;top:483.8px;width:19.80px;height:11.6px">32.9</div><div class="a dc" style="left:613.8px;top:483.8px;width:19.80px;height:11.6px">50.5</div><div class="a dc" style="left:633.6px;top:483.8px;width:19.80px;height:11.6px">37</div><div class="a dc" style="left:653.4px;top:483.8px;width:19.80px;height:11.6px">69.4</div><div class="a dc" style="left:673.2px;top:483.8px;width:19.80px;height:11.6px">61.9</div><div class="a dc" style="left:693.0px;top:483.8px;width:19.80px;height:11.6px">22.2</div><div class="a dc" style="left:712.8px;top:483.8px;width:19.80px;height:11.6px">54.1</div><div class="a dc" style="left:732.6px;top:483.8px;width:19.80px;height:11.6px">19.1</div><div class="a dc" style="left:752.4px;top:483.8px;width:19.80px;height:11.6px">50.1</div><div class="a dc" style="left:772.2px;top:483.8px;width:19.80px;height:11.6px">12.3</div>
</div></div>
<!-- h scrollbar -->
<div class="a" style="left:0px;top:490px;width:788px;height:10px;background:#f0f0f0"></div>
<div class="a" style="left:10px;top:492px;width:768px;height:6.5px;background:#c2c2c2"></div><div class="a" style="left:3px;top:493px;font-size:5px;color:#888">◂</div>
<div class="a" style="left:781px;top:493px;font-size:5px;color:#555">▸</div>
<!-- v scrollbar -->
<div id="sbar" class="a"></div>
<div class="a" style="left:790px;top:10px;width:8px;height:317px;background:#c6c6c6"></div>
<div class="a" style="left:791px;top:2px;font-size:5px;color:#777">▴</div>
<div class="a" style="left:791px;top:482px;font-size:5px;color:#777">▾</div>
</body></html>
